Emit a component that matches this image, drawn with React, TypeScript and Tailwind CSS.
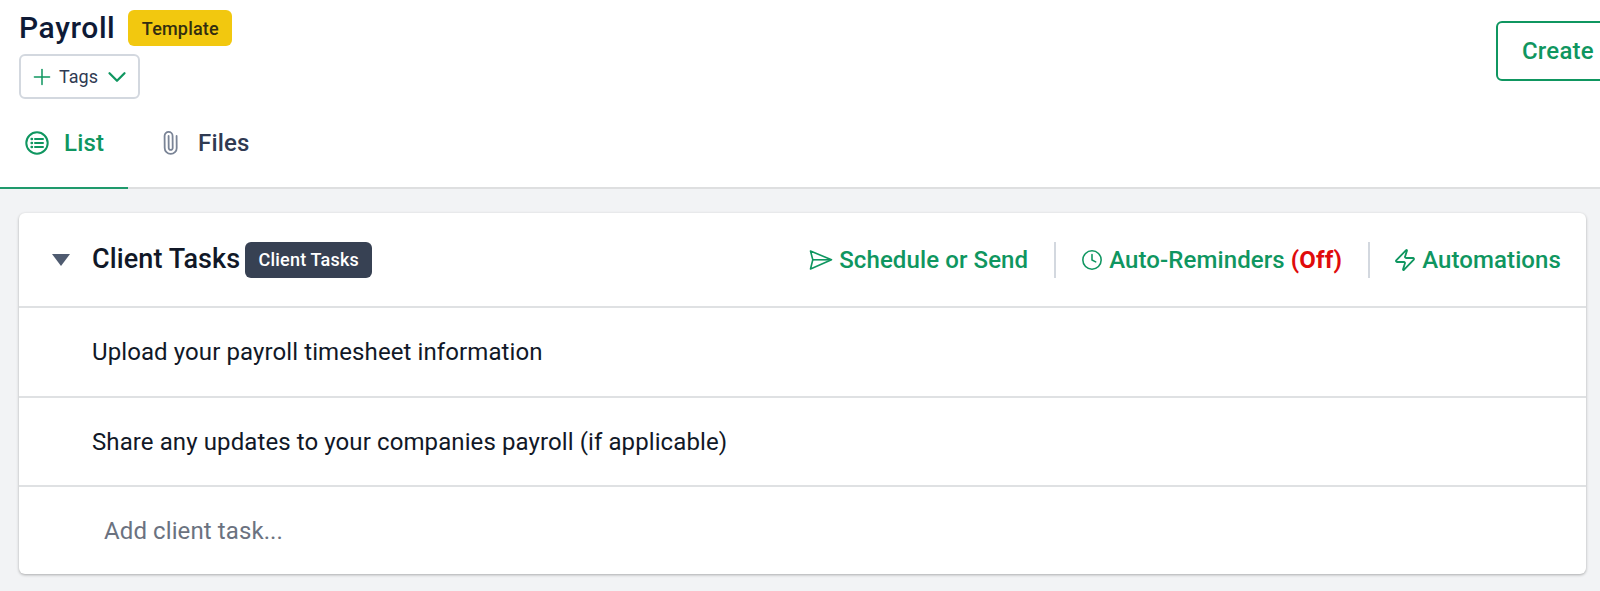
import { ChevronDown, Clock, Paperclip, Plus, Zap } from "lucide-react";

function ListCircle() {
  return (
    <svg width="26" height="26" viewBox="0 0 26 26" fill="none" stroke="#0f9660" className="shrink-0">
      <circle cx="13" cy="13" r="10.7" strokeWidth="2" />
      <path d="M11 9h8M11 13h8M11 17h8" strokeWidth="2" strokeLinecap="round" />
      <path d="M7.600 9h.4M7.600 13h.4M7.600 17h.4" strokeWidth="2.400" strokeLinecap="round" />
    </svg>
  );
}

function SendOutline() {
  return (
    <svg width="24" height="22" viewBox="0 0 24 22" fill="none" stroke="#0f9660" strokeWidth="1.600" strokeLinejoin="round" className="shrink-0">
      <path d="M1.500 2 22.500 10.800 1.500 20 3.800 10.800Z" />
      <path d="M3.800 10.800H22" />
    </svg>
  );
}

function HeaderAction({ icon, children }: { icon: React.ReactNode; children: React.ReactNode }) {
  return (
    <span className="flex items-center gap-[6px] text-[24px] tracking-[0.1px] font-medium text-[#0f9660]">
      {icon}
      <span>{children}</span>
    </span>
  );
}

function TaskRow({ label, height }: { label: string; height: string }) {
  return (
    <div className={`${height} flex items-center pl-[73px] border-b-2 border-[#dfe1e3] text-[24px] tracking-[0.1px] text-[#111827]`}>
      {label}
    </div>
  );
}

export default function App() {
  return (
    <div className="w-[1600px] h-[591px] overflow-hidden bg-[#f2f3f5] font-['Roboto',sans-serif]">
      {/* Header */}
      <header className="relative h-[189px] bg-white border-b-2 border-[#dedfe0]">
        <div className="pl-[19px] pt-[10px]">
          <div className="flex items-center gap-[13px] h-[36px]">
            <span className="text-[30px] font-medium tracking-[0.6px] leading-none text-[#0e1a36]">Payroll</span>
            <span className="h-[36px] w-[104px] rounded-[6px] bg-[#f2c80f] flex items-center justify-center text-[18px] tracking-[0.2px] font-medium text-[#332e10]">
              Template
            </span>
          </div>
          <button className="mt-[8px] h-[45px] w-[121px] rounded-[6px] border-2 border-[#d3d8df] flex items-center pl-[8px] text-[18px] text-[#2f3a52]">
            <Plus size={26} strokeWidth={1.400} color="#0f9660" className="shrink-0" />
            <span className="ml-[4px]">Tags</span>
            <ChevronDown size={30} strokeWidth={1.800} color="#0f9660" className="ml-[4px] shrink-0" />
          </button>
        </div>

        <button className="absolute left-[1496px] top-[21px] h-[60px] w-[160px] rounded-[6px] border-2 border-[#0f9660] pl-[24px] text-left text-[24px] tracking-[0.2px] font-medium text-[#0f9660]">
          Create
        </button>

        <nav className="flex h-[88px]">
          <div className="w-[128px] h-[90px] border-b-2 border-[#1f9a6c] flex items-center pl-[24px] gap-[14px] text-[24px] tracking-[0.2px] font-medium text-[#0f9660]">
            <ListCircle />
            List
          </div>
          <div className="flex items-center pl-[30px] gap-[16px] text-[24px] tracking-[0.2px] font-medium text-[#2f3a52]">
            <Paperclip size={24} strokeWidth={1.800} color="#7a8496" className="shrink-0 -rotate-45" />
            Files
          </div>
        </nav>
      </header>

      {/* Client tasks card */}
      <main className="pl-[19px] pr-[14px] pt-[24px]">
        <section className="h-[361px] rounded-[6px] bg-white shadow-[0_1px_3px_rgba(0,0,0,0.3)] overflow-hidden">
          <div className="h-[95px] flex items-center pl-[33px] pr-[25px] border-b-2 border-[#dfe1e3]">
            <span className="w-0 h-0 border-l-[9.500px] border-r-[9.500px] border-t-[12px] border-l-transparent border-r-transparent border-t-[#4f5b70]" />
            <span className="ml-[22px] text-[27px] tracking-[0.1px] font-medium text-[#111827]">Client Tasks</span>
            <span className="ml-[5px] h-[36px] w-[127px] rounded-[6px] bg-[#374153] flex items-center justify-center text-[18px] font-medium tracking-[0.2px] text-white">
              Client Tasks
            </span>
            <div className="ml-auto flex items-center">
              <HeaderAction icon={<SendOutline />}>Schedule or Send</HeaderAction>
              <span className="ml-[26px] mr-[25px] h-[36px] w-[2px] bg-[#d3d8df]" />
              <HeaderAction icon={<Clock size={22} strokeWidth={1.700} className="shrink-0" />}>
                Auto-Reminders <span className="font-bold text-[#e00b0b]">(Off)</span>
              </HeaderAction>
              <span className="ml-[26px] mr-[23px] h-[36px] w-[2px] bg-[#d3d8df]" />
              <HeaderAction icon={<Zap size={24} strokeWidth={1.800} className="shrink-0 -mr-[1px]" />}>Automations</HeaderAction>
            </div>
          </div>
          <TaskRow height="h-[90px]" label="Upload your payroll timesheet information" />
          <TaskRow height="h-[89px]" label="Share any updates to your companies payroll (if applicable)" />
          <div className="h-[87px] flex items-center pl-[85px] text-[24px] tracking-[0.1px] text-[#6b7280]">Add client task...</div>
        </section>
      </main>
    </div>
  );
}
